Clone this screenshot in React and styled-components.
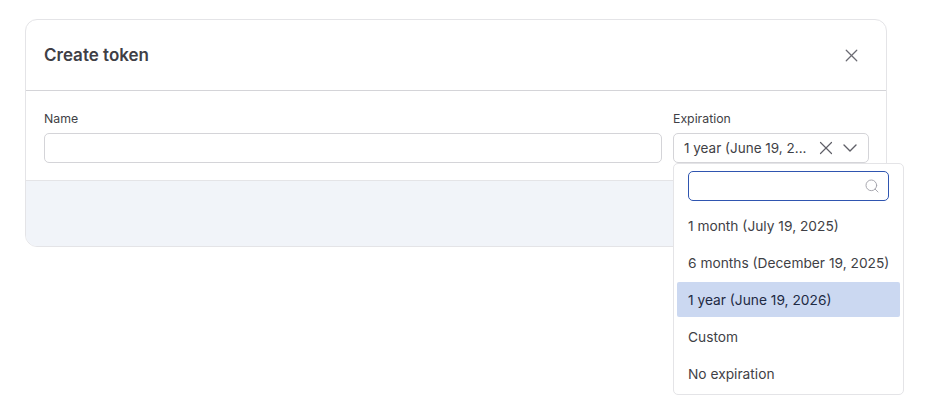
import React from 'react'
import styled, { createGlobalStyle } from 'styled-components'
import { X, ChevronDown, Search } from 'lucide-react'

const GlobalStyle = createGlobalStyle`
  html, body {
    margin: 0;
    background: #fff;
    font-family: Inter, "Liberation Sans", sans-serif;
    color: #3f3f46;
  }
  * { box-sizing: border-box; }
`

const Page = styled.div`
  padding: 19px 0 0 25px;
  height: 418px;
  overflow: hidden;
`

const Card = styled.div`
  width: 862px;
  height: 228px;
  border: 1px solid #e4e4e7;
  border-radius: 12px;
  display: flex;
  flex-direction: column;
`

const Header = styled.div`
  height: 71px;
  flex: none;
  padding: 0 23px 0 18px;
  display: flex;
  align-items: center;
  justify-content: space-between;
  border-bottom: 1px solid #d4d4d8;
`

const Title = styled.h2`
  margin: 0;
  font-size: 17px;
  font-weight: 600;
  line-height: 20px;
  color: #3f3f46;
`

const CloseButton = styled.button`
  width: 24px;
  height: 24px;
  padding: 0;
  border: 0;
  background: none;
  color: #6b6b73;
  display: flex;
  align-items: center;
  justify-content: center;
`

const Body = styled.div`
  height: 89px;
  flex: none;
  padding: 20px 17px 0 18px;
  display: flex;
  gap: 11px;
`

const Field = styled.div`
  position: relative;
  flex: ${p => (p.$grow ? '1' : 'none')};
  width: ${p => (p.$grow ? 'auto' : '196px')};
`

const Label = styled.label`
  display: block;
  font-size: 12.3px;
  font-weight: 400;
  line-height: 16px;
  margin-bottom: 6px;
  color: #3f3f46;
`

const TextInput = styled.input`
  display: block;
  width: 100%;
  height: 30px;
  border: 1px solid #d4d4d8;
  border-radius: 5px;
  background: #fff;
  outline: none;
`

const Select = styled.div`
  height: 30px;
  border: 1px solid #d4d4d8;
  border-radius: 5px;
  padding: 0 6px 0 10px;
  display: flex;
  align-items: center;
  font-size: 13.5px;
  color: #3f3f46;
`

const SelectValue = styled.span`
  flex: 1;
  min-width: 0;
  white-space: nowrap;
`

const SelectIcon = styled.span`
  width: 24px;
  flex: none;
  display: flex;
  justify-content: center;
  color: ${p => p.$color};
`

const Menu = styled.div`
  position: absolute;
  top: 52px;
  left: 0;
  width: 231px;
  height: 232px;
  background: #fff;
  border: 1px solid #e4e4e7;
  border-radius: 5px;
  padding: 7px 3px 0;
  z-index: 2;
`

const SearchBox = styled.div`
  position: relative;
  height: 30px;
  margin: 0 11px 7px;
  border: 1px solid #2f55b0;
  border-radius: 5px;
`

const SearchGlyph = styled(Search)`
  position: absolute;
  right: 8px;
  top: 6px;
  color: #a1a1aa;
`

const Options = styled.div`
  display: flex;
  flex-direction: column;
  gap: 2px;
`

const Option = styled.div`
  height: 35px;
  padding: 0 11px;
  display: flex;
  align-items: center;
  border-radius: 2px;
  font-size: 13.75px;
  white-space: nowrap;
  background: ${p => (p.$selected ? '#cbd8f1' : 'transparent')};
  color: ${p => (p.$selected ? '#1e2a44' : '#3f3f46')};
`

const Footer = styled.div`
  flex: 1;
  background: #f1f4f9;
  border-top: 1px solid #e4e4e7;
  border-radius: 0 0 11px 11px;
`

const options = [
  '1 month (July 19, 2025)',
  '6 months (December 19, 2025)',
  '1 year (June 19, 2026)',
  'Custom',
  'No expiration',
]

export default function App() {
  return (
    <Page>
      <GlobalStyle />
      <Card>
        <Header>
          <Title>Create token</Title>
          <CloseButton>
            <X size={21} strokeWidth={1.4} />
          </CloseButton>
        </Header>
        <Body>
          <Field $grow>
            <Label>Name</Label>
            <TextInput />
          </Field>
          <Field>
            <Label>Expiration</Label>
            <Select>
              <SelectValue>1 year (June 19, 2...</SelectValue>
              <SelectIcon $color="#5f5f67"><X size={22} strokeWidth={1.3} /></SelectIcon>
              <SelectIcon $color="#5f5f67"><ChevronDown size={24} strokeWidth={1.4} /></SelectIcon>
            </Select>
            <Menu>
              <SearchBox>
                <SearchGlyph size={16} strokeWidth={1.4} />
              </SearchBox>
              <Options>
                {options.map(o => (
                  <Option key={o} $selected={o.startsWith('1 year')}>{o}</Option>
                ))}
              </Options>
            </Menu>
          </Field>
        </Body>
        <Footer />
      </Card>
    </Page>
  )
}
